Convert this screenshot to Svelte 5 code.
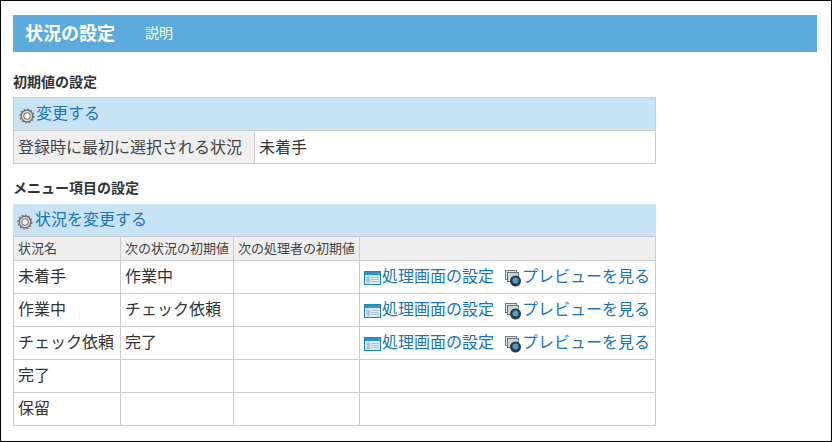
<script>
  const rows = [
    { name: '未着手', next: '作業中', links: true },
    { name: '作業中', next: 'チェック依頼', links: true },
    { name: 'チェック依頼', next: '完了', links: true },
    { name: '完了', next: '', links: false },
    { name: '保留', next: '', links: false }
  ];
</script>

{#snippet gear()}
  <svg class="gear" width="17" height="17" viewBox="0 0 17 17" aria-hidden="true">
    <circle cx="8.5" cy="8.5" r="6.2" fill="#dcdcdc" stroke="#6e6a68" stroke-width="1.4"/>
    <circle cx="8.5" cy="8.5" r="7.3" fill="none" stroke="#77726f" stroke-width="1.4" stroke-dasharray="2 1.8"/>
    <circle cx="8.5" cy="8.5" r="3.4" fill="#fff" stroke="#777" stroke-width="1.2"/>
  </svg>
{/snippet}

<main class="page">
  <header class="banner">
    <h1>状況の設定</h1>
    <span class="help">説明</span>
  </header>

  <h2>初期値の設定</h2>
  <div class="panel first">
    <div class="action">{@render gear()}<a href="#a">変更する</a></div>
    <div class="init">
      <div class="label">登録時に最初に選択される状況</div>
      <div class="value">未着手</div>
    </div>
  </div>

  <h2 class="second">メニュー項目の設定</h2>
  <div class="panel">
    <div class="action tall">{@render gear()}<a href="#a">状況を変更する</a></div>
    <table>
      <thead>
        <tr>
          <th class="c1">状況名</th>
          <th class="c2">次の状況の初期値</th>
          <th class="c3">次の処理者の初期値</th>
          <th></th>
        </tr>
      </thead>
      <tbody>
        {#each rows as r}
          <tr>
            <td>{r.name}</td>
            <td>{r.next}</td>
            <td></td>
            <td>
              {#if r.links}
                <span class="links">
                  <a href="#a" class="lnk">
                    <svg width="17" height="16" viewBox="0 0 17 16" aria-hidden="true">
                      <rect x="0.5" y="1.5" width="16" height="13" fill="#dfeaf3" stroke="#1a86c0"/>
                      <rect x="1" y="2" width="15" height="3" fill="#2a95cf"/>
                      <rect x="14" y="2.5" width="1.5" height="1.5" fill="#e8703a"/>
                      <rect x="2.5" y="6.5" width="3.5" height="6.5" fill="#a9c6dc"/>
                      <path d="M7 7.5h8M7 9.5h8M7 11.5h8" stroke="#a9c6dc"/>
                    </svg><span>処理画面の設定</span></a>
                  <a href="#a" class="lnk preview">
                    <svg width="18" height="17" viewBox="0 0 18 17" aria-hidden="true">
                      <rect x="0.5" y="0.5" width="11" height="9" fill="#dfe6ea" stroke="#6f7a80"/>
                      <rect x="2.5" y="2.5" width="11" height="9" fill="#c6d4dc" stroke="#66737a"/>
                      <circle cx="10.5" cy="11" r="5.5" fill="#2f3a40"/>
                      <circle cx="10.5" cy="10.5" r="3" fill="#4a9ecb"/>
                    </svg><span>プレビューを見る</span></a>
                </span>
              {/if}
            </td>
          </tr>
        {/each}
      </tbody>
    </table>
  </div>
</main>

<style>
  :global(body) {
    margin: 0;
    background: #fff;
  }
  .page {
    box-sizing: border-box;
    width: 832px;
    height: 442px;
    border: 1px solid #000;
    padding: 14px 14px 0 12px;
    font-family: "Noto Sans CJK JP", "Noto Sans", sans-serif;
    color: #333;
    font-size: 15px;
    overflow: hidden;
  }
  .banner {
    box-sizing: border-box;
    height: 37px;
    background: #5dabdc;
    color: #fff;
    display: flex;
    align-items: center;
    padding: 0 0 3px 12px;
  }
  h1 {
    margin: 0;
    width: 120px;
    font-size: 18px;
    font-weight: 700;
    line-height: 1;
  }
  .help {
    font-size: 14px;
    line-height: 1;
  }
  h2 {
    margin: 21px 0 0;
    height: 24px;
    font-size: 14px;
    font-weight: 700;
    line-height: 16px;
    color: #333;
  }
  h2.second {
    margin-top: 15px;
    height: 25px;
  }
  .panel {
    width: 643px;
    box-sizing: border-box;
  }
  .first {
    border: 1px solid #ccc;
  }
  .action {
    height: 32px;
    background: #c8e3f5;
    display: flex;
    align-items: center;
    padding-left: 5px;
    border-bottom: 1px solid #ccc;
  }
  .action a {
    margin-bottom: 4px;
  }
  .action.tall {
    box-sizing: border-box;
    border-bottom: 0;
    padding-left: 4px;
  }
  .gear {
    margin-top: 3px;
    flex: none;
    width: 16px;
    height: 16px;
    margin-right: 1px;
  }
  .tall .gear {
    margin-right: 2px;
  }
  a {
    color: #1a76b8;
    text-decoration: none;
    font-size: 16px;
    line-height: 1;
  }
  .init {
    display: flex;
    height: 32px;
    font-size: 16px;
    line-height: 30px;
  }
  .label {
    box-sizing: border-box;
    width: 241px;
    padding-left: 4px;
    background: #efefef;
    border-right: 1px solid #ccc;
    color: #444;
  }
  .value {
    padding-left: 4px;
  }
  table {
    width: 643px;
    border-collapse: collapse;
    table-layout: fixed;
  }
  th, td {
    box-sizing: border-box;
    border: 1px solid #ccc;
    padding: 0 4px;
    text-align: left;
    font-weight: 400;
    white-space: nowrap;
    overflow: hidden;
  }
  th {
    padding-bottom: 3px;
    height: 24px;
    background: #efefef;
    font-size: 13px;
    color: #444;
    line-height: 1;
  }
  td {
    height: 33px;
    padding-bottom: 4px;
    font-size: 16px;
    line-height: 1;
  }
  .c1 { width: 107px; }
  .c2 { width: 113px; }
  .c3 { width: 126px; }
  .links {
    display: flex;
    gap: 11px;
  }
  .lnk {
    display: flex;
    align-items: center;
  }
  .lnk svg {
    flex: none;
    margin-top: 3px;
    margin-bottom: -3px;
    margin-right: 1px;
  }
  .preview svg {
    margin-right: -1px;
  }
</style>
